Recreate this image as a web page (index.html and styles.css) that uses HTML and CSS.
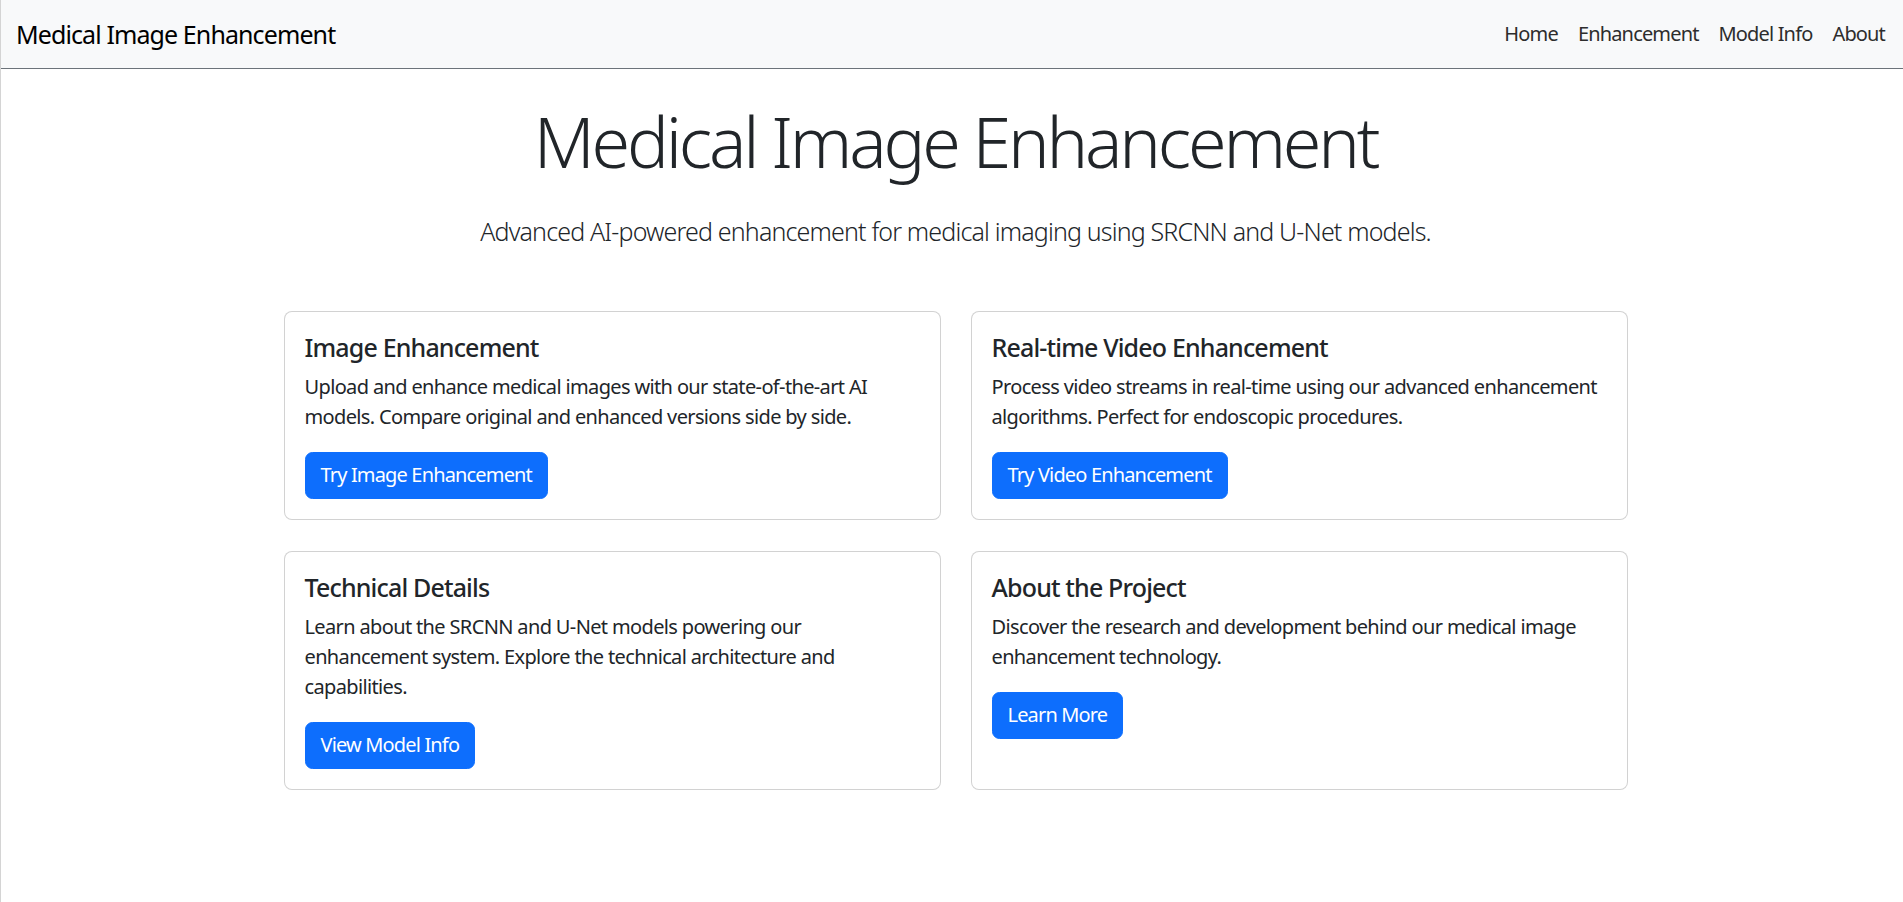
FILE: index.html
```html
<!DOCTYPE html>
<html lang="en">
<head>
<meta charset="utf-8">
<title>Medical Image Enhancement</title>
<link rel="stylesheet" href="styles.css">
</head>
<body>
<nav class="navbar">
  <a class="brand" href="#">Medical Image Enhancement</a>
  <ul class="nav-links">
    <li><a href="#">Home</a></li>
    <li><a href="#">Enhancement</a></li>
    <li><a href="#">Model Info</a></li>
    <li><a href="#">About</a></li>
  </ul>
</nav>
<main class="main">
  <section class="hero">
    <h1 class="display">Medical Image Enhancement</h1>
    <p class="lead">Advanced AI-powered enhancement for medical imaging using SRCNN and U-Net models.</p>
  </section>
  <section class="cards">
    <div class="card">
      <h5 class="card-title">Image Enhancement</h5>
      <p class="card-text">Upload and enhance medical images with our state-of-the-art AI models. Compare original and enhanced versions side by side.</p>
      <a class="btn" href="#">Try Image Enhancement</a>
    </div>
    <div class="card">
      <h5 class="card-title">Real-time Video Enhancement</h5>
      <p class="card-text">Process video streams in real-time using our advanced enhancement algorithms. Perfect for endoscopic procedures.</p>
      <a class="btn" href="#">Try Video Enhancement</a>
    </div>
    <div class="card">
      <h5 class="card-title">Technical Details</h5>
      <p class="card-text">Learn about the SRCNN and U-Net models powering our enhancement system. Explore the technical architecture and capabilities.</p>
      <a class="btn" href="#">View Model Info</a>
    </div>
    <div class="card">
      <h5 class="card-title">About the Project</h5>
      <p class="card-text">Discover the research and development behind our medical image enhancement technology.</p>
      <a class="btn" href="#">Learn More</a>
    </div>
  </section>
</main>
</body>
</html>
```
FILE: styles.css
```css
* { box-sizing: border-box; }
html, body { margin: 0; padding: 0; }
body {
  font-family: "Noto Sans", "Open Sans", sans-serif;
  font-size: 20px;
  line-height: 1.5;
  letter-spacing: -0.042em;
  color: #212529;
  background: #fff;
  border-left: 1px solid #d4d4d4;
  min-height: 902px;
}
a { text-decoration: none; }

.navbar {
  display: flex;
  align-items: center;
  justify-content: space-between;
  height: 69px;
  background: #f8f9fa;
  border-bottom: 1px solid #6c737a;
  padding: 0 8px 0 15px;
}
.brand {
  font-size: 25px;
  line-height: 37px;
  letter-spacing: -0.036em;
  color: #000;
}
.nav-links {
  display: flex;
  list-style: none;
  margin: 0;
  padding: 0;
}
.nav-links a {
  display: block;
  padding: 10px 10px;
  font-size: 20px;
  line-height: 30px;
  color: #2d2d2d;
}

.main {
  padding-left: 7px;
}
.hero {
  text-align: center;
  padding-top: 30px;
}
.display {
  font-size: 70px;
  font-weight: 300;
  line-height: 1.2;
  letter-spacing: -0.046em;
  margin: 0 0 30px;
}
.lead {
  font-size: 25px;
  font-weight: 300;
  line-height: 1.5;
  margin: 0 0 60px;
}

.cards {
  width: 1344px;
  margin: 0 auto;
  display: grid;
  grid-template-columns: 1fr 1fr;
  gap: 31px 30px;
}
.card {
  border: 1px solid rgba(0,0,0,.175);
  border-radius: 8px;
  padding: 20px;
  background: #fff;
}
.card-title {
  font-size: 25px;
  font-weight: 500;
  line-height: 1.2;
  margin: 0 0 10px;
}
.card-text {
  margin: 0 0 20px;
  letter-spacing: -0.032em;
}
.btn {
  display: inline-block;
  background: #0d6efd;
  color: #fff;
  border: 1px solid #0d6efd;
  border-radius: 7.5px;
  padding: 7.5px 15px;
  font-size: 20px;
  line-height: 30px;
}
```
